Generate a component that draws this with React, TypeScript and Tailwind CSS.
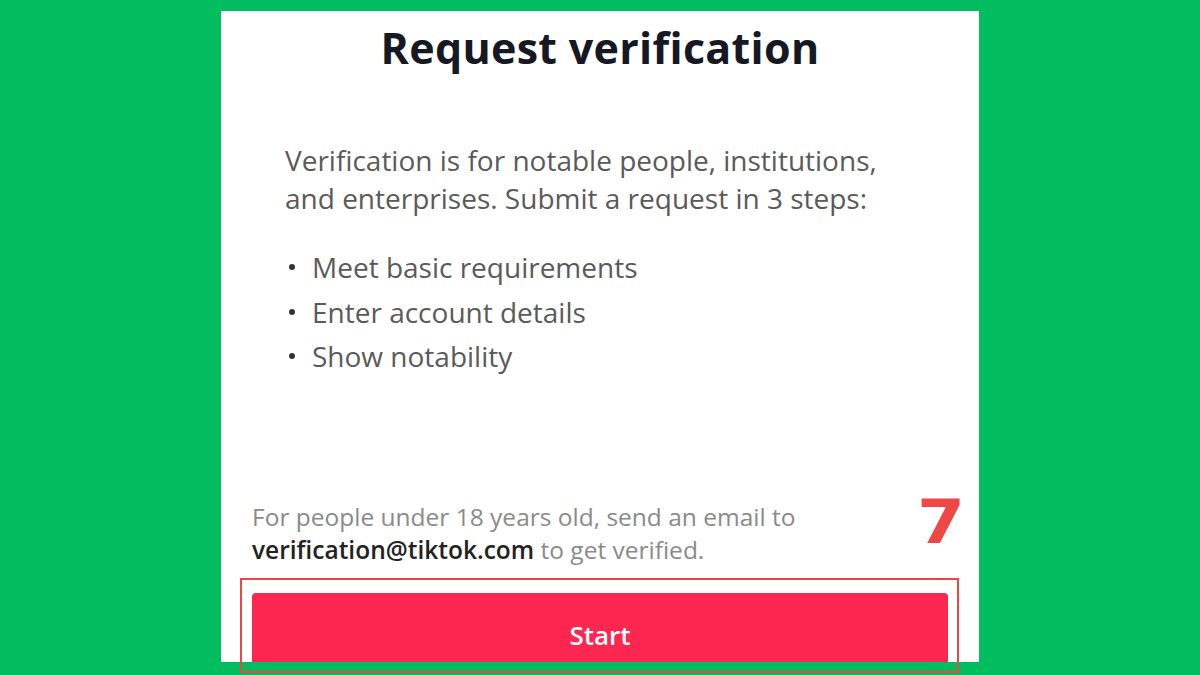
export default function App() {
  const steps = ["Meet basic requirements", "Enter account details", "Show notability"];

  return (
    <section
      className="relative h-[675px] w-[1200px] overflow-hidden bg-[#01BD5F]"
      style={{ fontFamily: "'Open Sans', Lato, sans-serif" }}
    >
      <div className="flex h-full justify-center pt-[11px] pb-[13px]">
        <div className="flex w-[758px] flex-col overflow-hidden bg-white">
          <h1 className="mt-[18px] text-center text-[43px] font-bold leading-[38px] tracking-[0.3px] text-[#161823]">
            Request verification
          </h1>

          <div className="pl-[64px] pr-[84px] pt-[74px]">
            <p className="text-[28px] leading-[38px] text-[#5a5a5a]">
              Verification is for notable people, institutions, and enterprises. Submit a request in 3 steps:
            </p>
            <ul className="mt-[28px] flex flex-col">
              {steps.map((s) => (
                <li key={s} className="flex items-center text-[28px] leading-[44.5px] text-[#5a5a5a]">
                  <span className="mr-[17px] ml-[4px] h-[6px] w-[6px] rounded-full bg-[#333333]" />
                  {s}
                </li>
              ))}
            </ul>
          </div>

          <div className="mt-auto mb-[-11px] px-[31px]">
            <p className="text-[24.5px] leading-[33px] text-[#8a8a8a]">
              For people under 18 years old, send an email to
              <br />
              <span className="font-semibold text-[#222222]">verification@tiktok.com</span> to get verified.
            </p>
            <button className="mt-[27px] flex h-[80px] w-full items-start justify-center rounded-[4px] bg-[#FB2750] pt-[23px] text-[26px] font-semibold text-white">
              Start
            </button>
          </div>
        </div>
      </div>

      <div className="absolute left-[240px] top-[578px] h-[95px] w-[719px] border-2 border-[#EE4545]" />
      <div
        className="absolute left-[917px] top-[492px] origin-left scale-x-115 text-[60px] font-bold leading-none text-[#EF4646]"
        style={{ fontFamily: "'DejaVu Sans', sans-serif" }}
      >
        7
      </div>
    </section>
  );
}
